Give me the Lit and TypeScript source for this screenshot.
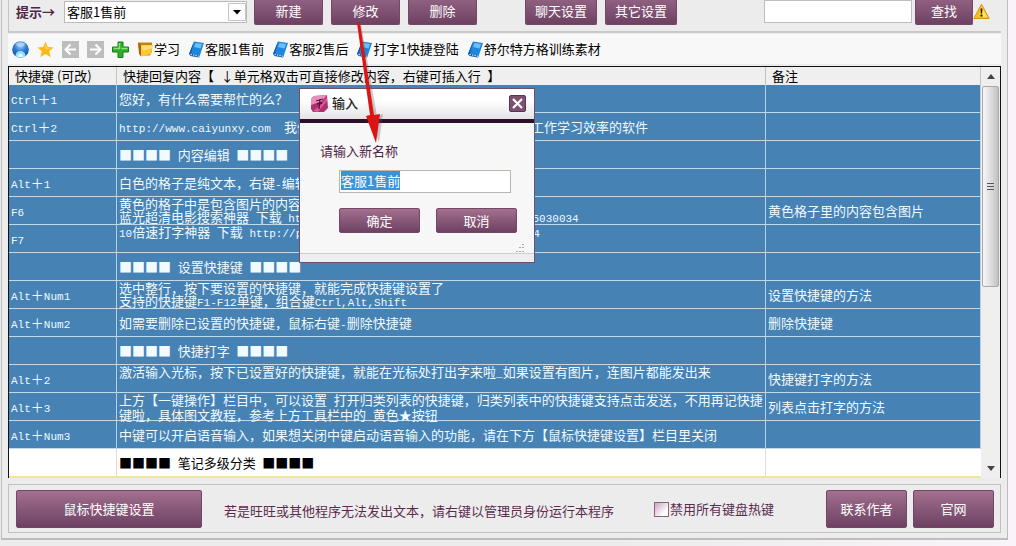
import { LitElement, html, css, svg } from "lit";
import { customElement, state, query } from "lit/decorators.js";
import { classMap } from "lit/directives/class-map.js";

interface Row {
  key: string;
  text: string;
  note?: string;
  top?: boolean;
  plain?: boolean;
}

const ROWS: Row[] = [
  { key: "Ctrl＋1", text: "您好，有什么需要帮忙的么？" },
  {
    key: "Ctrl＋2",
    text: "http://www.caiyunxy.com  我们专注研发提升办公、打字与各类日常的工作学习效率的软件",
  },
  { key: "", text: "■■■■ 内容编辑 ■■■■" },
  { key: "Alt＋1", text: "白色的格子是纯文本，右键-编辑" },
  {
    key: "F6",
    text: "黄色的格子中是包含图片的内容\n蓝光超清电影搜索神器 下载 http://pan.baidu.com/s/link?shareid=15030034",
    note: "黄色格子里的内容包含图片",
    top: true,
  },
  {
    key: "F7",
    text: "10倍速打字神器 下载 http://pan.baidu.com/s/link?shareid=20468714",
    top: true,
  },
  { key: "", text: "■■■■ 设置快捷键 ■■■■" },
  {
    key: "Alt＋Num1",
    text: "选中整行，按下要设置的快捷键，就能完成快捷键设置了\n支持的快捷键F1-F12单键，组合键Ctrl,Alt,Shift",
    note: "设置快捷键的方法",
    top: true,
  },
  { key: "Alt＋Num2", text: "如需要删除已设置的快捷键，鼠标右键-删除快捷键", note: "删除快捷键" },
  { key: "", text: "■■■■ 快捷打字 ■■■■" },
  {
    key: "Alt＋2",
    text: "激活输入光标，按下已设置好的快捷键，就能在光标处打出字来啦_如果设置有图片，连图片都能发出来",
    note: "快捷键打字的方法",
    top: true,
  },
  {
    key: "Alt＋3",
    text: "上方【一键操作】栏目中，可以设置 打开归类列表的快捷键，归类列表中的快捷键支持点击发送，不用再记快捷键啦，具体图文教程，参考上方工具栏中的 黄色★按钮",
    note: "列表点击打字的方法",
    top: true,
  },
  {
    key: "Alt＋Num3",
    text: "中键可以开启语音输入，如果想关闭中键启动语音输入的功能，请在下方【鼠标快捷键设置】栏目里关闭",
  },
  { key: "", text: "■■■■ 笔记多级分类 ■■■■", plain: true },
];

/* Half-width runs are set in a smaller monospace so that two of them fill one full-width cell. */
const mixed = (text: string) =>
  text
    .split(/([\x20-\x7e]+)/)
    .filter(Boolean)
    .map((part) => (/^[\x20-\x7e]/.test(part) ? html`<span class="half">${part}</span>` : part));

const globe = svg`<svg class="icon" viewBox="0 0 17 17" aria-hidden="true">
  <defs><radialGradient id="g" cx=".5" cy=".25" r=".8"><stop offset="0" stop-color="#a9d4f8"/><stop offset=".45" stop-color="#2f7fd8"/><stop offset="1" stop-color="#0b3f9c"/></radialGradient></defs>
  <circle cx="8.500" cy="8.500" r="8.300" fill="url(#g)"/>
  <path d="M4 2.500c2-1.500 7-1.500 9 0l-1 2.500-3.500 1-3.500-1z" fill="#b9dcf8" opacity=".7"/>
  <path d="M3.500 15.500c0-4 2-5.500 5-5.500s5 1.500 5 5.500c-3 1.600-7 1.600-10 0z" fill="#8fdcfb"/>
  <path d="M6 16c0-2.500 1-3.500 2.500-3.500s2.500 1 2.500 3.500z" fill="#e6fbff"/></svg>`;
const star = svg`<svg class="icon" viewBox="0 0 17 17" aria-hidden="true">
  <path d="M8.500 .5l2.300 5.500 5.900.4-4.500 3.900 1.500 6-5.200-3.200-5.200 3.200 1.500-6L.3 6.400l5.900-.4z" fill="#fbb917"/>
  <path d="M8.500 2.500l1.700 4.300 4 .4-5.700 1z" fill="#ffd65a"/></svg>`;
const back = svg`<svg class="icon" viewBox="0 0 17 17" aria-hidden="true"><path fill="#bdbdbd" d="M0 0h17v17H0z"/>
  <path d="M14 8.500H4M8.500 3.500l-5 5 5 5" fill="none" stroke="#fff" stroke-width="2"/></svg>`;
const forward = svg`<svg class="icon" viewBox="0 0 17 17" aria-hidden="true"><path fill="#bdbdbd" d="M0 0h17v17H0z"/>
  <path d="M3 8.500h10M8.500 3.500l5 5-5 5" fill="none" stroke="#fff" stroke-width="2"/></svg>`;
const plus = svg`<svg class="icon" viewBox="0 0 17 17" aria-hidden="true">
  <path d="M6 1h5v5h5.500v5H11v5.500H6V11H.5V6H6z" fill="#2eae2a" stroke="#197a1c"/>
  <path d="M7.500 2v5.500H1.500M9.500 7.500h6" fill="none" stroke="#84e86c" stroke-width="1.500"/></svg>`;
const folder = svg`<svg class="icon" viewBox="0 0 17 17" aria-hidden="true">
  <path d="M1 1.500h14v9l-2 4H3z" fill="#c77f12"/><path d="M1 1.500l3 3v11l-2-3z" fill="#a9640a"/>
  <path d="M4 4h12l-2 9-10 2.500z" fill="#ffc82e"/><path d="M4.500 4.500h11l-1 3-9 2z" fill="#ffe07a"/></svg>`;
const book = svg`<svg class="icon" viewBox="0 0 17 17" aria-hidden="true">
  <path d="M6 .5L16 2l-4.500 13.500L1 13z" fill="#1f86dd"/><path d="M6 .5L1 13l1.500 2L11 16.500 11.500 15 3 12.500z" fill="#0d55a8"/>
  <path d="M7.500 2l6.500 1-1.500 4.500-6.500-1.500z" fill="#6cc0f7"/>
  <path d="M2.500 13.300l8.500 2" stroke="#cfe9fb" stroke-width="1.200" stroke-dasharray="1.500 1"/></svg>`;
const warning = svg`<svg class="icon" viewBox="0 0 17 17" aria-hidden="true">
  <path d="M8.500 1.200L16.200 15.500H.8z" fill="#fcc21b" stroke="#d89412" stroke-linejoin="round"/>
  <path d="M8.500 3.500l5.500 10.500h-4z" fill="#ffe372"/>
  <path d="M7.500 5.500h2l-.4 5h-1.200z" fill="#222"/><circle cx="8.500" cy="12.600" r="1.100" fill="#222"/></svg>`;
const appMark = svg`<svg class="icon" viewBox="0 0 17 17" aria-hidden="true">
  <path d="M3 1l13-1 1 13-4 4H2L0 14V4z" fill="#b0306f"/><path d="M3 1l13-1-5 6-11 4V4z" fill="#ea8fba"/>
  <path d="M2 16l9-7 5-7v4l-6 7-3 4z" fill="#d65c97"/>
  <path d="M5 6l7-2M9 4l-1 10M6 9l5-1" stroke="#5c1040" stroke-width="1.300" fill="none"/></svg>`;

const LINKS = [
  { label: "学习", icon: folder },
  { label: "客服1售前", icon: book },
  { label: "客服2售后", icon: book },
  { label: "打字1快捷登陆", icon: book },
  { label: "舒尔特方格训练素材", icon: book },
];

@customElement("app-root")
export class AppRoot extends LitElement {
  @state() private open = true;
  @state() private draft = "客服1售前";
  @query(".name-input") private nameInput?: HTMLInputElement;

  static styles = css`
    :host {
      display: block;
      box-sizing: border-box;
      min-height: 100vh;
      position: relative;
      overflow: hidden;
      padding: 0 8px 6px 1px;
      background: linear-gradient(90deg, #ececec 60%, #faf4fa);
      font: 13px/18px "Noto Sans CJK SC", sans-serif;
      text-spacing-trim: space-all;
      color: #000;
    }
    * {
      box-sizing: border-box;
    }
    button,
    input,
    select {
      font: inherit;
      color: inherit;
      margin: 0;
      padding: 0;
      border-radius: 0;
    }
    .half {
      font-family: "Liberation Mono", monospace;
      font-size: 11px;
      line-height: 1;
      white-space: pre-wrap;
    }
    .icon {
      display: block;
      width: 17px;
      height: 17px;
      flex: none;
    }
    .frame {
      border: 1px solid #bdbdbd;
      border-width: 0 1px 2px;
      background: #ececec;
      padding: 0 6px 5px;
    }
    .topbar {
      display: flex;
      align-items: flex-start;
      height: 33px;
      padding-left: 7px;
      border-left: 1px solid #c4c4c4;
      border-bottom: 2px solid #c9c9c9;
    }
    .hint {
      width: 48px;
      padding-top: 3px;
      color: #4f2346;
      font-weight: 700;
      white-space: nowrap;
    }
    .combo {
      display: grid;
      width: 183px;
      margin: 1px 7px 0 0;
    }
    .combo select {
      grid-area: 1 / 1;
      width: 100%;
      height: 22px;
      padding-left: 2px;
      appearance: none;
      border: 1px solid #b9b9b9;
      background: #fff;
    }
    .combo svg {
      grid-area: 1 / 1;
      justify-self: end;
      align-self: center;
      width: 18px;
      height: 18px;
      margin-right: 1px;
      pointer-events: none;
    }
    .btn {
      border: 1px solid #744767;
      border-radius: 2px;
      background: linear-gradient(#a4708f, #875878 50%, #6e4163);
      color: #fff;
      cursor: pointer;
      white-space: nowrap;
    }
    .tab {
      width: 69px;
      height: 25px;
      margin-right: 8px;
      padding-bottom: 3px;
      border-width: 0 1px 1px;
      border-radius: 0 0 2px 2px;
      background: linear-gradient(#8f6080, #6e4163);
    }
    .wide {
      width: 72px;
    }
    .settings {
      display: flex;
      margin-left: 40px;
    }
    .search {
      display: flex;
      margin-left: auto;
      margin-right: 11px;
    }
    .search input {
      width: 148px;
      height: 23px;
      margin-right: 3px;
      border: 1px solid #bdbdbd;
      background: #fff;
    }
    .search .tab {
      width: 58px;
      margin-right: 0;
    }
    .search .icon {
      margin-top: 3px;
    }
    .toolbar {
      display: flex;
      align-items: center;
      gap: 8px;
      height: 30px;
      margin-top: 1px;
      padding-left: 4px;
      background: #f8f8f8;
    }
    .tool {
      display: flex;
      align-items: center;
      border: 0;
      background: none;
      white-space: nowrap;
      cursor: pointer;
    }
    .grid {
      display: flex;
      margin-top: 2px;
      border: 1px solid #111;
      border-bottom: 0;
      background: #efefef;
    }
    table {
      flex: 1;
      min-width: 0;
      table-layout: fixed;
      border-collapse: separate;
      border-spacing: 0;
      border-bottom: 1px solid #ece98c;
    }
    .c-key {
      width: 108px;
    }
    .c-note {
      width: 215px;
    }
    th {
      height: 18px;
      padding: 0 0 0 6px;
      background: linear-gradient(90deg, transparent calc(100% - 1px), #c3c3c3 0) #efefef;
      font-weight: 400;
      text-align: left;
      white-space: nowrap;
    }
    td {
      height: 28px;
      padding: 0 0 0 2px;
      border-right: 1px solid #b9cfe2;
      border-bottom: 1px solid #c3d8e9;
      background: #4682b4;
      color: #f0faff;
      vertical-align: middle;
    }
    .content {
      white-space: pre-wrap;
    }
    .content.top {
      height: 27px;
      line-height: 13px;
    }
    .plain td {
      background: #fff;
      color: #000;
      border-color: #dcdcdc;
      border-bottom-color: #ece98c;
    }
    .plain td:last-child {
      border-right-color: #fff;
    }
    .scroll {
      display: flex;
      flex-direction: column;
      width: 19px;
      padding: 0 1px;
      background: #efefef;
    }
    .scroll button {
      display: grid;
      place-items: center;
      height: 19px;
      border: 0;
      background: none;
    }
    .scroll button svg {
      width: 8px;
      height: 5px;
    }
    .track {
      flex: 1;
    }
    .thumb {
      display: grid;
      place-items: center;
      height: 54%;
      border: 1px solid #a9a9a9;
      border-radius: 2px;
      background: linear-gradient(90deg, #f6f6f6, #dcdcde 55%, #c2c2c6);
    }
    .thumb svg {
      width: 7px;
      height: 8px;
    }
    .footer {
      display: flex;
      align-items: center;
      height: 49px;
      margin-top: 6px;
      padding: 0 6px 0 7px;
      border: 1px solid #c0c0c0;
      color: #5b2c50;
    }
    .footer .btn {
      height: 38px;
      width: 81px;
    }
    .footer .mouse {
      width: 186px;
    }
    .tip {
      margin: 4px 0 0 22px;
      white-space: nowrap;
    }
    .disable {
      display: flex;
      align-items: center;
      gap: 1px;
      margin: 1px 52px 0 auto;
      white-space: nowrap;
    }
    .disable input {
      appearance: none;
      width: 15px;
      height: 15px;
      border: 1px solid #8a6380;
      background: linear-gradient(135deg, #c9a5be, #fff 75%);
    }
    .disable input:checked {
      background: #875878;
    }
    .pair {
      display: flex;
      gap: 6px;
    }
    .dialog {
      position: absolute;
      left: 299px;
      top: 88px;
      width: 236px;
      margin: 0;
      border: 1px solid #72506a;
      background: #f7f7f7;
      color: #4f2346;
    }
    .dialog header {
      display: flex;
      align-items: center;
      gap: 4px;
      height: 34px;
      padding: 0 8px 2px 11px;
      border-bottom: 4px solid #2e1029;
      background: linear-gradient(#fff 40%, #e4e2e5);
    }
    .dialog h2 {
      flex: 1;
      margin: 0;
      font: inherit;
      font-weight: 500;
      color: #222;
    }
    .close {
      display: grid;
      place-items: center;
      width: 17px;
      height: 17px;
      border: 1px solid #5c3352;
      border-radius: 2px;
      background: #7d4f70;
    }
    .close svg {
      width: 11px;
      height: 11px;
    }
    .form {
      display: flex;
      flex-direction: column;
      padding: 19px 17px 0 20px;
    }
    .name-input {
      width: 172px;
      height: 23px;
      margin: 10px 0 0 19px;
      padding: 0 2px 2px 1px;
      border: 1px solid #b7b7b0;
      outline: 0;
      background: #fff;
    }
    .name-input::selection {
      background: #3b93d8;
      color: #fff;
    }
    .actions {
      display: flex;
      justify-content: space-between;
      margin: 15px 0 0 19px;
    }
    .actions .btn {
      width: 81px;
      height: 25px;
    }
    .grip {
      align-self: flex-end;
      width: 10px;
      height: 10px;
      margin: 10px -8px 0 0;
    }
    .status {
      height: 9px;
      border-top: 1px solid #cfcccf;
      background: #efedef;
    }
    .arrow {
      position: absolute;
      left: 350px;
      top: 18px;
      width: 40px;
      height: 130px;
      pointer-events: none;
    }
  `;

  firstUpdated() {
    this.nameInput?.focus();
    this.nameInput?.select();
  }

  private close = () => {
    this.open = false;
  };

  private show = () => {
    this.open = true;
  };

  private onDraft(e: Event) {
    this.draft = (e.target as HTMLInputElement).value;
  }

  private renderTopbar() {
    return html`<div class="topbar">
      <label class="hint" for="group">提示→</label>
      <div class="combo">
        <select id="group">
          <option>客服1售前</option>
          <option>客服2售后</option>
        </select>
        <svg viewBox="0 0 18 18" aria-hidden="true">
          <path d="M.5 .5h17v17H.5z" fill="#fdfdfd" stroke="#c4c4c4" />
          <path d="M5 7h8l-4 4.500z" fill="#000" />
        </svg>
      </div>
      <button class="btn tab">新建</button>
      <button class="btn tab" @click=${this.show}>修改</button>
      <button class="btn tab">删除</button>
      <div class="settings">
        <button class="btn tab wide">聊天设置</button>
        <button class="btn tab wide">其它设置</button>
      </div>
      <div class="search">
        <input type="text" aria-label="查找" />
        <button class="btn tab">查找</button>
        ${warning}
      </div>
    </div>`;
  }

  private renderToolbar() {
    return html`<nav class="toolbar">
      <button class="tool" aria-label="主页">${globe}</button>
      <button class="tool" aria-label="收藏">${star}</button>
      <button class="tool" aria-label="后退">${back}</button>
      <button class="tool" aria-label="前进">${forward}</button>
      <button class="tool" aria-label="添加">${plus}</button>
      ${LINKS.map((l) => html`<button class="tool">${l.icon}<span>${l.label}</span></button>`)}
    </nav>`;
  }

  private renderGrid() {
    return html`<div class="grid">
      <table>
        <colgroup>
          <col class="c-key" />
          <col />
          <col class="c-note" />
        </colgroup>
        <thead>
          <tr>
            <th>快捷键 (可改)</th>
            <th>${mixed("快捷回复内容【 ↓单元格双击可直接修改内容，右键可插入行 】")}</th>
            <th>备注</th>
          </tr>
        </thead>
        <tbody>
          ${ROWS.map(
            (r) => html`<tr class=${classMap({ plain: !!r.plain })}>
              <td>${mixed(r.key)}</td>
              <td><div class=${classMap({ content: true, top: !!r.top })}>${mixed(r.text)}</div></td>
              <td>${mixed(r.note ?? "")}</td>
            </tr>`,
          )}
        </tbody>
      </table>
      <div class="scroll">
        <button aria-label="向上滚动">
          <svg viewBox="0 0 8 5"><path d="M4 0l4 5H0z" fill="#444" /></svg>
        </button>
        <div class="track">
          <div class="thumb">
            <svg viewBox="0 0 7 8">
              <path d="M0 .5h7M0 3.500h7M0 6.500h7" stroke="#555" />
            </svg>
          </div>
        </div>
        <button aria-label="向下滚动">
          <svg viewBox="0 0 8 5"><path d="M0 0h8L4 5z" fill="#444" /></svg>
        </button>
      </div>
    </div>`;
  }

  private renderFooter() {
    return html`<div class="footer">
      <button class="btn mouse">鼠标快捷键设置</button>
      <span class="tip">若是旺旺或其他程序无法发出文本，请右键以管理员身份运行本程序</span>
      <label class="disable"><input type="checkbox" />禁用所有键盘热键</label>
      <div class="pair">
        <button class="btn">联系作者</button>
        <button class="btn">官网</button>
      </div>
    </div>`;
  }

  private renderDialog() {
    return html`<section class="dialog" role="dialog" aria-labelledby="title">
        <header>
          ${appMark}
          <h2 id="title">输入</h2>
          <button class="close" aria-label="关闭" @click=${this.close}>
            <svg viewBox="0 0 11 11">
              <path d="M1 1l9 9M10 1l-9 9" stroke="#fff" stroke-width="2.200" />
            </svg>
          </button>
        </header>
        <div class="form">
          <label for="name">请输入新名称</label>
          <input
            id="name"
            class="name-input"
            type="text"
            .value=${this.draft}
            @input=${this.onDraft}
          />
          <div class="actions">
            <button class="btn" @click=${this.close}>确定</button>
            <button class="btn" @click=${this.close}>取消</button>
          </div>
          <svg class="grip" viewBox="0 0 10 10" aria-hidden="true">
            <path
              d="M7 1h2v1H7zM4 4h2v1H4zM7 4h2v1H7zM1 8h2v1H1zM4 8h2v1H4zM7 8h2v1H7z"
              fill="#a8a8a8"
            />
          </svg>
        </div>
        <div class="status"></div>
      </section>
      <svg class="arrow" viewBox="0 0 40 130" aria-hidden="true">
        <path d="M9 6l16 92 6-2-4 28-10-24 4-1L7 6z" fill="#555" opacity=".3" transform="translate(2 0)" />
        <path d="M7 5h3l14 92 6-1-4 29-10-27 4-1z" fill="#dc1414" />
      </svg>`;
  }

  render() {
    return html`<main class="frame">
        ${this.renderTopbar()} ${this.renderToolbar()} ${this.renderGrid()} ${this.renderFooter()}
      </main>
      ${this.open ? this.renderDialog() : null}`;
  }
}
